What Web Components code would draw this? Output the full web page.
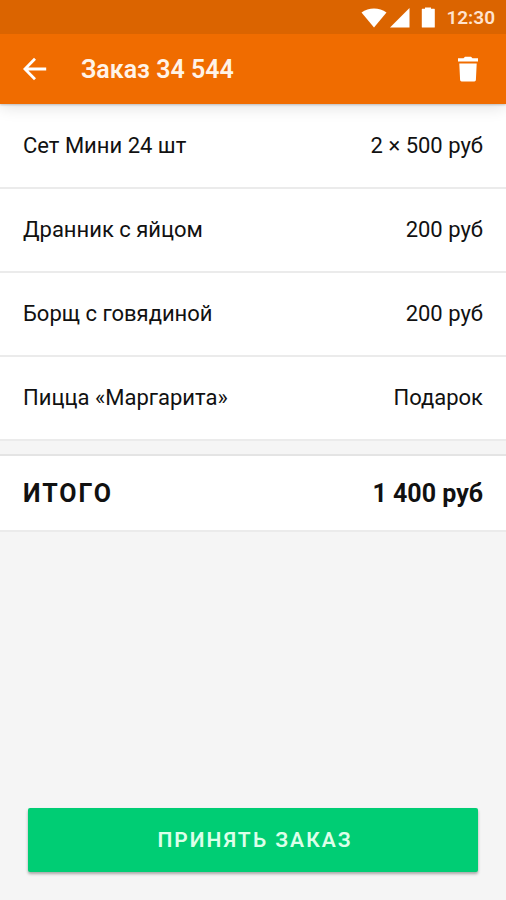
<!DOCTYPE html>
<html lang="ru">
<head>
<meta charset="utf-8">
<meta name="viewport" content="width=device-width, initial-scale=1">
<title>Заказ 34 544</title>
<style>
  body { margin: 0; background: #f5f5f5; font-family: Roboto, "Noto Sans", sans-serif; color: #111; }
</style>
</head>
<body>
<order-screen></order-screen>

<template id="status-bar">
  <style>
    :host { display: flex; justify-content: flex-end; align-items: center; box-sizing: border-box; height: 34px; padding: 2px 11px 0; background: #db6400; color: #ffe3cf; font-size: 19px; font-weight: 600; line-height: 24px; position: relative; z-index: 2; }
    svg { display: block; fill: #fff; margin-right: 3px; }
  </style>
  <svg width="84" height="22" viewBox="0 0 84 22" role="img" aria-label="Wi-Fi, сигнал, батарея">
    <path d="M15 20.500 2.500 5.500c7.200-5.400 17.800-5.400 25 0z"/>
    <path d="M31 20.500h19.500V1z"/>
    <path d="M66 0.500h6v1.200H75.300q.5 0 .5.500v17.800q0 .5-.5.500H63.300q-.5 0-.5-.5V2.200q0-.5.500-.5H66z"/>
  </svg>
  <slot></slot>
</template>

<template id="app-bar">
  <style>
    :host { display: flex; align-items: center; height: 70px; padding: 0 23px; background: #f06c00; color: #fff; position: relative; z-index: 1; box-shadow: 0 2px 16px rgba(0,0,0,.14), 0 1px 2px rgba(0,0,0,.2); }
    button { display: flex; align-items: center; justify-content: center; height: 48px; padding: 0; border: 0; background: none; color: inherit; cursor: pointer; }
    h1 { flex: 1; margin: 0 34px; padding-top: 1px; color: #fff3e8; font-size: 25px; line-height: 32px; font-weight: 600; }
  </style>
  <button type="button" aria-label="Назад">
    <svg width="24" height="26" viewBox="0 0 24 26" fill="none" stroke="currentColor" stroke-width="2.800"><path d="M23.200 13H2.500M12 2.800 1.900 13 12 23.200"/></svg>
  </button>
  <h1><slot></slot></h1>
  <button type="button" aria-label="Удалить заказ">
    <svg width="30" height="26" viewBox="-4 0 30 26" fill="currentColor"><path d="M1 2.300h5.500L8 .8h6l1.500 1.500H21v3.200H1zM2.300 7.500h17.400l-.8 16.500q-.1 1.400-1.500 1.400H4.600q-1.400 0-1.500-1.400z"/></svg>
  </button>
</template>

<template id="order-row">
  <style>
    :host { display: flex; justify-content: space-between; align-items: center; box-sizing: border-box; height: 84px; padding: 0 23px; background: #fff; border-bottom: 2px solid #ebebeb; font-size: 22px; line-height: 28px; }
  </style>
  <slot></slot><slot name="price"></slot>
</template>

<template id="order-total">
  <style>
    :host { display: flex; justify-content: space-between; align-items: center; box-sizing: border-box; height: 78px; margin-top: 13px; padding: 2px 23px 0; background: #fff; border-top: 2px solid #e4e4e4; border-bottom: 2px solid #ebebeb; font-size: 25px; line-height: 32px; font-weight: 700; }
    .label { letter-spacing: 2px; }
  </style>
  <span class="label"><slot></slot></span><span><slot name="price"></slot></span>
</template>

<template id="accept-button">
  <style>
    :host { display: block; padding: 28px; }
    button { display: block; width: 100%; height: 64px; padding: 0 0 0 4px; border: 0; border-radius: 2px; background: #00cd74; color: #dcffe9; font-family: inherit; font-size: 21px; line-height: 24px; font-weight: 600; letter-spacing: 2px; cursor: pointer; box-shadow: 0 2px 3px rgba(0,0,0,.32); }
  </style>
  <button type="button"><slot></slot></button>
</template>

<template id="order-screen">
  <style>
    :host { display: flex; flex-direction: column; min-height: 100vh; }
    .items { padding-top: 1px; background: #fff; }
    accept-button { margin-top: auto; }
  </style>
  <status-bar>12:30</status-bar>
  <app-bar>Заказ 34 544</app-bar>
  <main>
    <div class="items">
      <order-row>Сет Мини 24 шт<span slot="price">2 × 500 руб</span></order-row>
      <order-row>Дранник с яйцом<span slot="price">200 руб</span></order-row>
      <order-row>Борщ с говядиной<span slot="price">200 руб</span></order-row>
      <order-row>Пицца «Маргарита»<span slot="price">Подарок</span></order-row>
    </div>
    <order-total>ИТОГО<span slot="price">1 400 руб</span></order-total>
  </main>
  <accept-button>ПРИНЯТЬ ЗАКАЗ</accept-button>
</template>

<script>
  class TemplateElement extends HTMLElement {
    constructor() {
      super();
      const template = document.getElementById(this.localName);
      this.attachShadow({ mode: "open" }).append(template.content.cloneNode(true));
    }
  }
  for (const name of ["status-bar", "app-bar", "order-row", "order-total", "accept-button", "order-screen"]) {
    customElements.define(name, class extends TemplateElement {});
  }
</script>
</body>
</html>
